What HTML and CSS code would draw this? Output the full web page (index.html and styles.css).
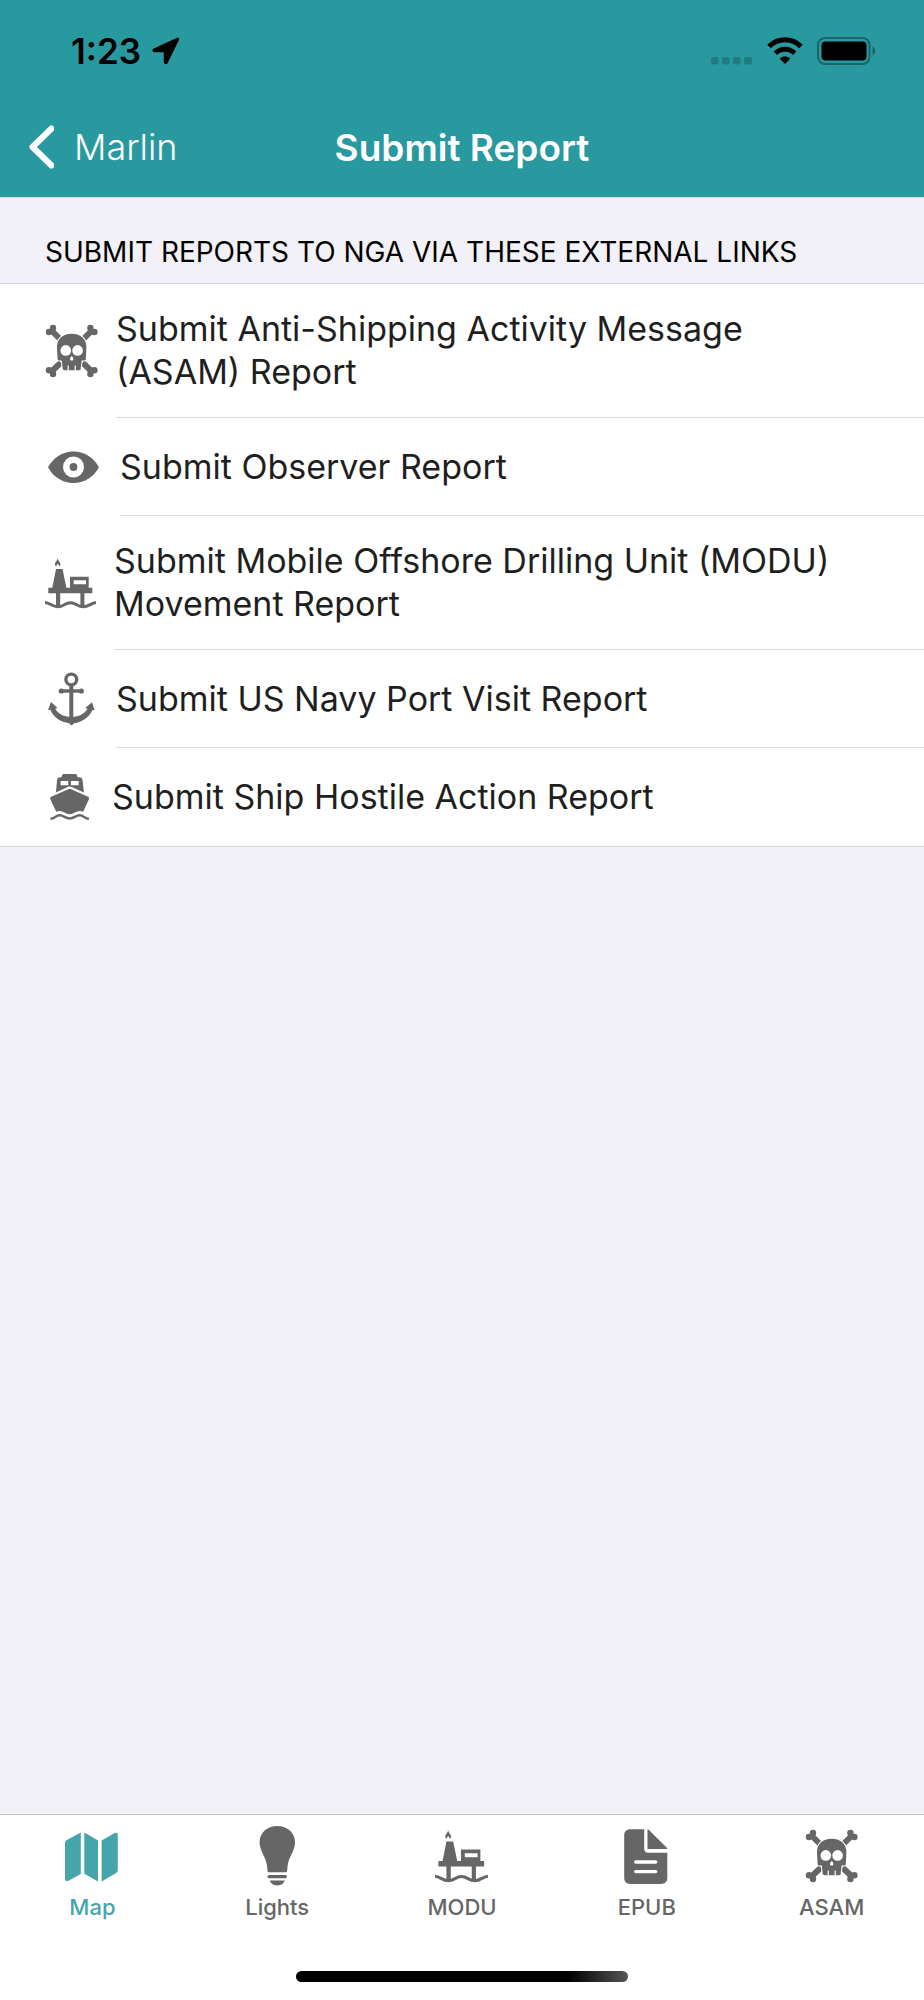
FILE: index.html
```html
<!DOCTYPE html>
<html lang="en">
<head>
    <meta charset="UTF-8">
    <meta name="viewport" content="width=device-width, initial-scale=1.0">
    <title>Submit Report</title>
    <link rel="stylesheet" href="styles.css">
</head>
<body>

    <!-- icons used more than once -->
    <svg class="sprite" aria-hidden="true">
        <symbol id="skull" viewBox="0 0 54 54">
            <g fill="currentColor">
                <circle cx="4" cy="8" r="3.2"/><circle cx="8" cy="4" r="3.2"/>
                <circle cx="49.4" cy="8" r="3.2"/><circle cx="45.4" cy="4" r="3.2"/>
                <circle cx="4" cy="46.2" r="3.2"/><circle cx="8" cy="50" r="3.2"/>
                <circle cx="49.4" cy="46.2" r="3.2"/><circle cx="45.4" cy="50" r="3.2"/>
            </g>
            <path d="M6 6l9.5 9.5M47.4 6l-9.5 9.5M6 48l10-9.5M47.4 48l-10-9.5" stroke="currentColor" stroke-width="6"/>
            <path d="M26.7 9.7c-9.5 0-14.7 5.6-14.7 13.3l.6 12.2c.2 1.1 1 1.4 2 1.4h2.2l.9 8.4c.1.8.6 1.2 1.4 1.2h15.2c.8 0 1.3-.4 1.4-1.2l.9-8.4h2.2c1 0 1.8-.3 2-1.4l.6-12.2c0-7.7-5.2-13.3-14.7-13.3z" fill="currentColor" stroke="#fff" stroke-width="2" paint-order="stroke"/>
            <g fill="#fff">
                <circle cx="20.8" cy="26.4" r="5.3"/>
                <circle cx="32.6" cy="26.4" r="5.3"/>
                <path d="M26.7 32.3c1 0 1.6 2 1.6 3s-.6 1.3-1.6 1.3-1.6-.3-1.6-1.3.6-3 1.6-3z"/>
                <path d="M22.6 41.5h1.2V47h-1.2zM29.6 41.5h1.2V47h-1.2z"/>
            </g>
        </symbol>
        <symbol id="rig" viewBox="0 0 52 54">
            <path d="M12.7 2.3c.2 2.5 2.7 3.6 2.7 6 0 1-.5 1.8-1.2 2.3-.2-1.3-.9-2.2-1.500-2.900-.7.7-1.300 1.600-1.500 2.900-.8-.5-1.300-1.300-1.300-2.300 0-2.400 2.500-3.500 2.800-6z" fill="currentColor"/>
            <path fill-rule="evenodd" d="M11 13h6.500l3.900 18.700H25v-11h18.700v11h3.600v5.500h-7.900V50h-4V37.200H15.200V50H11V37.200H3.300v-5.500h4zM28.700 24.300v4H41v-4z" fill="currentColor"/>
            <path d="M0 46.500c5 .3 7 4.300 12.800 4.300S20 46.700 25.500 46.700s7 4.100 12.700 4.100S46 46.800 51 46.500" fill="none" stroke="currentColor" stroke-width="3"/>
        </symbol>
    </svg>

    <header class="header">
        <div class="status">
            <div class="status-group">
                <span class="time">1:23</span>
                <svg class="location" width="28" height="28" viewBox="0 0 28 28">
                    <path d="M25.5 1.4L2 12.2c-1.4.8-1 2.3.4 2.4H12.5v10.5c.2 1.5 2 1.8 2.7.4L26.3 2.5c.3-.8-.1-1.300-.8-1.100z" stroke="#000" stroke-width="1.5" stroke-linejoin="round"/>
                </svg>
            </div>
            <div class="status-group">
                <svg width="42" height="28" viewBox="0 0 42 28" fill="#217c81">
                    <rect x="0" y="20" width="7.5" height="7.5" rx="2"/>
                    <rect x="11" y="20" width="7.5" height="7.5" rx="2"/>
                    <rect x="22" y="20" width="7.5" height="7.5" rx="2"/>
                    <rect x="33" y="20" width="8" height="7.5" rx="2"/>
                </svg>
                <svg width="36" height="28" viewBox="0 0 36 28">
                    <path d="M2 9.5c9-9 23-9 32 0M8.3 16.2c5.5-5.3 13.9-5.3 19.4 0" fill="none" stroke="#000" stroke-width="5"/>
                    <path d="M18 27l-5.3-5.5c3-2.6 7.6-2.6 10.6 0z"/>
                </svg>
                <svg width="60" height="28" viewBox="0 0 60 28">
                    <rect x="1" y="1" width="51.5" height="26" rx="7" fill="none" stroke="#1c6468" stroke-width="2"/>
                    <rect x="4.5" y="4.5" width="45" height="19" rx="4"/>
                    <path d="M55.5 9.5c3.5 1 3.5 8 0 9z" fill="#1c6468"/>
                </svg>
            </div>
        </div>
        <nav class="nav">
            <a class="back" href="#">
                <svg width="26" height="44" viewBox="0 0 26 44">
                    <path d="M23.5 3.500L4.500 22l19 18.500" fill="none" stroke="currentColor" stroke-width="6" stroke-linecap="round" stroke-linejoin="round"/>
                </svg>
                Marlin
            </a>
            <h1 class="title">Submit Report</h1>
        </nav>
    </header>

    <main class="content">
        <h2 class="section-title">Submit reports to NGA via these external links</h2>
        <ul class="list">
            <li>
                <a class="row" href="#">
                    <svg width="54" height="54"><use href="#skull"/></svg>
                    <span class="row-text">Submit Anti-Shipping Activity Message (ASAM) Report</span>
                </a>
            </li>
            <li>
                <a class="row" href="#">
                    <svg width="58" height="54" viewBox="0 0 58 54">
                        <path d="M3 27.3C8 18 17 11.4 28.5 11.4S49 18 54 27.3C49 36.6 40 43 28.5 43S8 36.6 3 27.3z" fill="currentColor"/>
                        <circle cx="28.5" cy="27" r="10.5" fill="#fff"/>
                        <circle cx="28.5" cy="27" r="3.9" fill="currentColor"/>
                    </svg>
                    <span class="row-text">Submit Observer Report</span>
                </a>
            </li>
            <li>
                <a class="row" href="#">
                    <svg width="52" height="54"><use href="#rig"/></svg>
                    <span class="row-text">Submit Mobile Offshore Drilling Unit (MODU) Movement Report</span>
                </a>
            </li>
            <li>
                <a class="row" href="#">
                    <svg width="54" height="54" viewBox="0 0 54 54">
                        <circle cx="26.3" cy="7.5" r="5.4" fill="none" stroke="currentColor" stroke-width="3.4"/>
                        <path d="M26.3 13v36" stroke="currentColor" stroke-width="4"/>
                        <path d="M15.5 19h21.6" stroke="currentColor" stroke-width="3.4"/>
                        <g fill="currentColor">
                            <circle cx="16.3" cy="19" r="2.6"/>
                            <circle cx="36.3" cy="19" r="2.6"/>
                            <path d="M6 30l6.5 6-2.3.7c3 5 8.5 8.2 16.1 8.2s13.2-3.2 16.2-8.2l-2.3-.7 6.8-5.8 2.6 8-2.2-.3c-3.3 7.6-10.4 12.2-18.2 13.3l-2.600 2.200-2.600-2.200C15.700 50.200 8.500 45.500 5.300 37.800L3 38z"/>
                        </g>
                    </svg>
                    <span class="row-text">Submit US Navy Port Visit Report</span>
                </a>
            </li>
            <li>
                <a class="row" href="#">
                    <svg width="50" height="54" viewBox="0 0 50 54">
                        <path fill-rule="evenodd" d="M18.5 4h12c1 0 1.7.8 2 3.3h2c1.8 0 2.8.9 3 2.5l1.4 12.7-12.7-5.7c-1-.4-2-.4-3 0l-12.3 5.7 1.2-12.700c.2-1.600 1.200-2.500 3-2.500h1.600C17 4.800 17.500 4 18.500 4zM15.600 11v4.300h7.700V11zM26 11v4.300h7.700V11z" fill="currentColor"/>
                        <path d="M23.300 19.300c1-.4 1.800-.4 2.800 0l16.500 7.200c1.500.7 1.900 1.600 1.200 3l-5.600 12.200c-3.700-1.800-6.500-.3-9.200 1.300-2.900 1.600-5.700 1.600-8.600 0-2.700-1.600-5.500-3.100-9.200-1.300L5.500 29.500c-.7-1.400-.3-2.300 1.200-3z" fill="currentColor"/>
                        <path d="M5.500 48.800c4.500 0 5-3.500 9.200-3.500s5.500 3.200 10 3.200 5.800-3.200 10-3.200 4.700 3.500 9.200 3.500" fill="none" stroke="currentColor" stroke-width="2.400"/>
                    </svg>
                    <span class="row-text">Submit Ship Hostile Action Report</span>
                </a>
            </li>
        </ul>
    </main>

    <footer class="footer">
        <nav class="tabs">
            <a class="tab active" href="#">
                <svg width="54" height="60" viewBox="0 0 54 60" fill="currentColor">
                    <path d="M15.8 6.5v41.6L3.5 54.7C1.5 55.6 0 55 0 53V17c0-1.5.5-2.3 1.8-3z"/>
                    <path d="M19.3 6.5L33 14.5v40.9l-13.7-7.7z"/>
                    <path d="M36.6 14.5l12.7-7.3c2-1 3.5-.2 3.5 1.6v35.5c0 1.2-.5 2-1.6 2.6l-14.6 8.5z"/>
                </svg>
                Map
            </a>
            <a class="tab" href="#">
                <svg width="54" height="60" viewBox="0 0 54 60" fill="currentColor">
                    <path d="M27.3 0C37.5 0 45 6.8 45 16.3c0 8.7-6.5 14.5-7.4 23.7l-.5 5c-.1.9-.5 1.2-1.2 1.2H18.7c-.7 0-1.1-.3-1.2-1.2l-.5-5C16.1 30.8 9.6 25 9.6 16.3 9.6 6.8 17.1 0 27.3 0z"/>
                    <rect x="17.5" y="49" width="19.5" height="3.2" rx="1.6"/>
                    <path d="M19.8 54.6h14.9c-.8 3.1-3.7 4.9-7.4 4.9s-6.7-1.8-7.5-4.9z"/>
                </svg>
                Lights
            </a>
            <a class="tab" href="#">
                <svg width="54" height="60"><use href="#rig"/></svg>
                MODU
            </a>
            <a class="tab" href="#">
                <svg width="54" height="60" viewBox="0 0 54 60">
                    <path d="M10.5 3.3h13.7v19.5c0 2.5 1.4 3.9 3.9 3.9h19.2v25.1c0 4-2.3 6.2-6.3 6.2H10.5c-4 0-6.3-2.2-6.3-6.2V9.5c0-4 2.3-6.2 6.3-6.2z" fill="currentColor"/>
                    <path d="M27.5 3.3c.8.1 1.4.5 2 1.1L46.3 21.2c.6.6.9 1.1.9 1.9H27.5z" fill="currentColor"/>
                    <path d="M15.7 36h20M15.7 45.6h20" stroke="#fff" stroke-width="3.4" stroke-linecap="round"/>
                </svg>
                EPUB
            </a>
            <a class="tab" href="#">
                <svg width="54" height="60"><use href="#skull"/></svg>
                ASAM
            </a>
        </nav>
        <div class="home-indicator"></div>
    </footer>

</body>
</html>
```
FILE: styles.css
```css
* {
    box-sizing: border-box;
}
body {
    display: flex;
    flex-direction: column;
    min-height: 100vh;
    margin: 0;
    background-color: #f2f1f7;
    color: #1f1f1f;
    font-family: Inter, "Liberation Sans", sans-serif;
}
a {
    color: inherit;
    text-decoration: none;
}
svg {
    flex-shrink: 0;
}
.sprite {
    position: absolute;
    width: 0;
    height: 0;
}

/* header */
.header {
    background-color: #2999a0;
    border-bottom: 1px solid #d0dde2;
}
.status {
    display: flex;
    justify-content: space-between;
    align-items: center;
    height: 101px;
    padding: 0 47px 0 71px;
    color: #000;
}
.status-group {
    display: flex;
    align-items: center;
    gap: 14px;
}
.time {
    font-size: 35px;
    font-weight: 600;
}
.location {
    margin-left: -3px;
}
.nav {
    display: grid;
    grid-template-columns: 1fr auto 1fr;
    align-items: center;
    height: 96px;
    padding: 0 28px 4px;
    color: #fff;
}
.back {
    display: flex;
    align-items: center;
    gap: 20px;
    font-size: 36px;
    font-weight: 300;
}
.title {
    margin: 0;
    font-size: 37px;
    font-weight: 600;
}

/* list */
.content {
    flex: 1;
}
.section-title {
    margin: 0;
    padding: 36px 45px 13px;
    font-size: 28px;
    font-weight: 400;
    line-height: 36px;
    color: #000;
    text-transform: uppercase;
}
.list {
    margin: 0;
    padding: 0;
    list-style: none;
    background-color: #fff;
    border-top: 1px solid #d4d4d7;
    border-bottom: 1px solid #d4d4d7;
}
.row {
    display: flex;
    align-items: center;
    gap: 17px;
    padding-left: 45px;
    color: #666;
}
.row-text {
    display: flex;
    flex: 1;
    align-items: center;
    min-height: 98px;
    padding: 23px 60px 24px 0;
    border-bottom: 1px solid #dcdcde;
    color: #1f1f1f;
    font-size: 34px;
    line-height: 43px;
}
li:last-child .row-text {
    border-bottom: none;
}

/* tab bar */
.footer {
    padding-bottom: 18px;
    background-color: #fff;
    border-top: 1px solid #c3c3c6;
}
.tabs {
    display: grid;
    grid-template-columns: repeat(5, 1fr);
}
.tab {
    display: flex;
    flex-direction: column;
    align-items: center;
    gap: 8px;
    padding: 11px 0 51px;
    color: #666;
    font-size: 22px;
    font-weight: 500;
    line-height: 26px;
}
.tab.active {
    color: #45a5ab;
}
.home-indicator {
    width: 36%;
    height: 11px;
    margin: 0 auto;
    border-radius: 6px;
    background: linear-gradient(to right, #000 82%, #555);
}
```
